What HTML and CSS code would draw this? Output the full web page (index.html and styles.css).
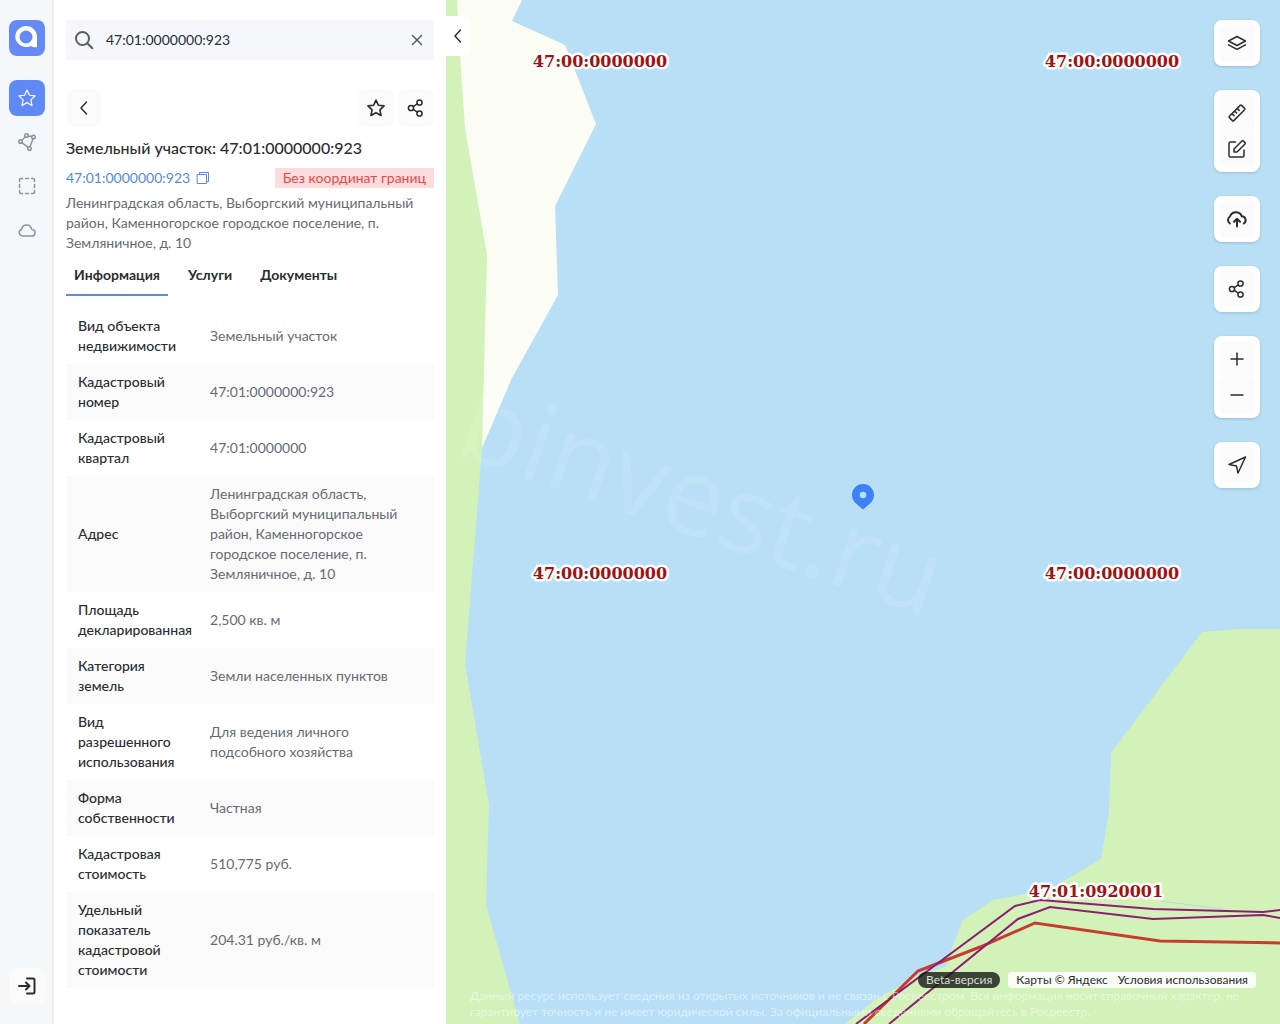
FILE: index.html
```html
<!DOCTYPE html>
<html lang="ru">

<head>
    <meta charset="UTF-8">
    <meta name="viewport" content="width=device-width, initial-scale=1">
    <title>Земельный участок: 47:01:0000000:923</title>
    <link rel="stylesheet" href="styles.css">
</head>

<body>
    <!-- Боковое меню -->
    <nav class="sidebar">
        <a href="#" class="logo" aria-label="Главная">
            <svg width="36" height="36" viewBox="0 0 36 36">
                <path d="M17 6a11 10.500 0 1 0 5 20c1.500 1 3.500 1.500 6 1.200V17A11 11 0 0 0 17 6z" fill="#fff" />
                <circle cx="17" cy="17" r="6.500" fill="#668af5" />
            </svg>
        </a>
        <button type="button" class="side-btn active" aria-label="Избранное">
            <svg class="icon" width="20" height="20" viewBox="0 0 24 24"><path d="M12 2.500l2.900 6.200 6.800.8-5 4.700 1.300 6.800-6-3.400-6 3.400 1.300-6.800-5-4.700 6.800-.8z" /></svg>
        </button>
        <button type="button" class="side-btn" aria-label="Полигон">
            <svg class="icon" width="20" height="20" viewBox="0 0 20 20"><circle cx="3.500" cy="9.500" r="1.800" /><circle cx="9.500" cy="3.500" r="1.800" /><circle cx="16.500" cy="5" r="1.800" /><circle cx="12.500" cy="16.500" r="1.800" /><path d="M4.800 8.200l3.500-3.500M11.300 4l3.400.6M16 6.800l-3 7.900M5 10.600l6 4.800" /></svg>
        </button>
        <button type="button" class="side-btn" aria-label="Выделить область">
            <svg class="icon" width="20" height="20" viewBox="0 0 20 20"><path d="M2.500 5.500V4A1.500 1.500 0 0 1 4 2.500h1.500M8.500 2.500h3M14.500 2.500H16A1.500 1.500 0 0 1 17.500 4v1.500M17.500 8.500v3M17.500 14.500V16a1.500 1.500 0 0 1-1.500 1.500h-1.500M11.500 17.500h-3M5.500 17.500H4A1.500 1.500 0 0 1 2.500 16v-1.500M2.500 11.500v-3" /></svg>
        </button>
        <button type="button" class="side-btn" aria-label="Облако">
            <svg class="icon" width="20" height="20" viewBox="0 0 20 20"><path d="M5.500 16h9a3.200 3.200 0 0 0 .6-6.400c-.3-.1-.5-.3-.6-.7A5 5 0 0 0 4.800 8.500c0 .5-.1.800-.5 1A3.400 3.400 0 0 0 5.500 16z" /></svg>
        </button>
        <button type="button" class="side-btn login" aria-label="Войти">
            <svg class="icon strong" width="20" height="20" viewBox="0 0 20 20"><path d="M10 2.500h6A1.500 1.500 0 0 1 17.500 4v12a1.500 1.500 0 0 1-1.500 1.500h-6M2 10h10M9 6.500l3.500 3.500L9 13.500" /></svg>
        </button>
    </nav>

    <!-- Карточка участка -->
    <section class="panel">
        <form class="search">
            <svg class="icon search-icon" width="20" height="20" viewBox="0 0 20 20"><circle cx="8.500" cy="8.500" r="6.500" /><path d="M13.300 13.300l5 5" /></svg>
            <input type="text" value="47:01:0000000:923" aria-label="Поиск">
            <button type="reset" class="clear" aria-label="Очистить">
                <svg class="icon" width="12" height="12" viewBox="0 0 12 12"><path d="M1.500 1.500l9 9M10.500 1.500l-9 9" /></svg>
            </button>
        </form>

        <div class="actions">
            <button type="button" class="btn" aria-label="Назад">
                <svg class="icon" width="20" height="20" viewBox="0 0 20 20"><path d="M12.500 4L7 10l5.500 6" /></svg>
            </button>
            <button type="button" class="btn push" aria-label="В избранное">
                <svg class="icon strong" width="20" height="20" viewBox="0 0 24 24"><path d="M12 2.500l2.900 6.200 6.800.8-5 4.700 1.300 6.800-6-3.400-6 3.400 1.300-6.800-5-4.700 6.800-.8z" /></svg>
            </button>
            <button type="button" class="btn" aria-label="Поделиться">
                <svg class="icon" width="20" height="20" viewBox="0 0 20 20"><circle cx="5" cy="10" r="2.600" /><circle cx="13.500" cy="4.500" r="2.600" /><circle cx="13.500" cy="15.500" r="2.600" /><path d="M7.200 8.600l4.100-2.700M7.200 11.400l4.100 2.700" /></svg>
            </button>
        </div>

        <h1>Земельный участок: 47:01:0000000:923</h1>

        <div class="number-row">
            <a href="#">47:01:0000000:923
                <svg class="icon copy" width="14" height="14" viewBox="0 0 14 14"><path d="M1.500 3.500h9v9h-9zM3.500 3.500v-2h9v9h-2" /></svg>
            </a>
            <span class="tag">Без координат границ</span>
        </div>

        <p class="address">Ленинградская область, Выборгский муниципальный район, Каменногорское городское поселение, п. Земляничное, д. 10</p>

        <div class="tabs" role="tablist">
            <button type="button" role="tab" aria-selected="true" class="tab active">Информация</button>
            <button type="button" role="tab" aria-selected="false" class="tab">Услуги</button>
            <button type="button" role="tab" aria-selected="false" class="tab">Документы</button>
        </div>

        <table class="info">
            <tr>
                <th scope="row">Вид объекта недвижимости</th>
                <td>Земельный участок</td>
            </tr>
            <tr>
                <th scope="row">Кадастровый номер</th>
                <td>47:01:0000000:923</td>
            </tr>
            <tr>
                <th scope="row">Кадастровый квартал</th>
                <td>47:01:0000000</td>
            </tr>
            <tr>
                <th scope="row">Адрес</th>
                <td>Ленинградская область, Выборгский муниципальный район, Каменногорское городское поселение, п. Земляничное, д. 10</td>
            </tr>
            <tr>
                <th scope="row">Площадь декларированная</th>
                <td>2,500 кв. м</td>
            </tr>
            <tr>
                <th scope="row">Категория земель</th>
                <td>Земли населенных пунктов</td>
            </tr>
            <tr>
                <th scope="row">Вид разрешенного использования</th>
                <td>Для ведения личного подсобного хозяйства</td>
            </tr>
            <tr>
                <th scope="row">Форма собственности</th>
                <td>Частная</td>
            </tr>
            <tr>
                <th scope="row">Кадастровая стоимость</th>
                <td>510,775 руб.</td>
            </tr>
            <tr>
                <th scope="row">Удельный показатель кадастровой стоимости</th>
                <td>204.31 руб./кв. м</td>
            </tr>
        </table>
    </section>

    <!-- Карта -->
    <main class="map">
        <svg class="map-canvas" viewBox="446 0 834 1024" preserveAspectRatio="xMidYMid slice">
            <rect x="446" width="834" height="1024" fill="#b8dff5" />
            <path d="M446 0H522L512 21 565 45 596 124 555 206 558 295 512 378 482 448 446 448z" fill="#fbfdf5" />
            <path d="M446 0H457L459 40 465 128 487 255 482 448 465 664 489 805 486 905 520 1024H446z" fill="#d2f2b9" />
            <path d="M1280 629L1240 629 1202 632 1111 753 1109 812 1101 859 1052 888 1030 893 993 900 963 920 952 948 946 966 915 977 875 1000 845 1024H1280z" fill="#d2f2b9" />
            <path class="stream" d="M1160 901L1223 909" />
            <path class="line red" d="M864 1024L918 971 980 947 1035 923 1160 941 1280 943" />
            <path class="line" d="M856 1024L1015 906 1040 900 1153 909 1263 912 1280 910" />
            <path class="line" d="M889 1024L1018 919 1050 907 1153 919 1263 915 1280 918" />
            <text class="watermark" x="928" y="617" transform="rotate(19 928 617)">binvest.ru</text>
            <text class="quarter" x="600" y="67">47:00:0000000</text>
            <text class="quarter" x="1112" y="67">47:00:0000000</text>
            <text class="quarter" x="600" y="579">47:00:0000000</text>
            <text class="quarter" x="1112" y="579">47:00:0000000</text>
            <text class="quarter" x="1096" y="897">47:01:0920001</text>
            <path d="M863 509.500l-7.800-6.800a11 11 0 1 1 15.600 0zM863 491.700a3.300 3.300 0 1 0 0 6.600 3.300 3.300 0 0 0 0-6.600z" fill="#3b82f6" fill-rule="evenodd" />
        </svg>

        <button type="button" class="collapse" aria-label="Свернуть панель">
            <svg class="icon" width="20" height="20" viewBox="0 0 20 20"><path d="M12.500 4L7 10l5.500 6" /></svg>
        </button>

        <div class="controls">
            <div class="group">
                <button type="button" class="btn" aria-label="Слои">
                    <svg class="icon" width="20" height="20" viewBox="0 0 20 20"><path d="M10 3.500l8.500 4.500-8.500 4.500L1.500 8zM1.500 11.800l8.500 4.500 8.500-4.500" /></svg>
                </button>
            </div>
            <div class="group">
                <button type="button" class="btn" aria-label="Линейка">
                    <svg class="icon" width="20" height="20" viewBox="0 0 20 20"><path d="M2.400 13.200L13.200 2.400a1 1 0 0 1 1.400 0l3 3a1 1 0 0 1 0 1.400L6.800 17.600a1 1 0 0 1-1.400 0l-3-3a1 1 0 0 1 0-1.400zM5 10.600l2 2M7.600 8l2 2M10.200 5.400l2 2" /></svg>
                </button>
                <button type="button" class="btn" aria-label="Рисование">
                    <svg class="icon" width="20" height="20" viewBox="0 0 20 20"><path d="M8.500 3H3.500A1.500 1.500 0 0 0 2 4.500v12A1.500 1.500 0 0 0 3.500 18h12a1.500 1.500 0 0 0 1.500-1.500V11M7 10l8-8a1 1 0 0 1 1.400 0l1.600 1.600a1 1 0 0 1 0 1.400l-8 8H7z" /></svg>
                </button>
            </div>
            <div class="group">
                <button type="button" class="btn" aria-label="Загрузить">
                    <svg class="icon strong" width="20" height="20" viewBox="0 0 20 20"><path d="M2.800 14.500A4.200 4.200 0 0 1 3 7.500 6.300 6.300 0 0 1 14.800 7.300a3.900 3.900 0 0 1 2 7.200M10 17.500V10M7 12.800l3-3 3 3" /></svg>
                </button>
            </div>
            <div class="group">
                <button type="button" class="btn" aria-label="Поделиться картой">
                    <svg class="icon" width="20" height="20" viewBox="0 0 20 20"><circle cx="5" cy="10" r="2.600" /><circle cx="13.500" cy="4.500" r="2.600" /><circle cx="13.500" cy="15.500" r="2.600" /><path d="M7.200 8.600l4.100-2.700M7.200 11.400l4.100 2.700" /></svg>
                </button>
            </div>
            <div class="group">
                <button type="button" class="btn" aria-label="Приблизить">
                    <svg class="icon" width="20" height="20" viewBox="0 0 20 20"><path d="M4 10h12M10 4v12" /></svg>
                </button>
                <button type="button" class="btn" aria-label="Отдалить">
                    <svg class="icon" width="20" height="20" viewBox="0 0 20 20"><path d="M4 10h12" /></svg>
                </button>
            </div>
            <div class="group">
                <button type="button" class="btn" aria-label="Моё местоположение">
                    <svg class="icon" width="20" height="20" viewBox="0 0 20 20"><path d="M18.500 2L2 9.500l7.500 1.600L11 18z" /></svg>
                </button>
            </div>
        </div>

        <footer class="map-footer">
            <div class="badges">
                <span class="beta">Beta-версия</span>
                <div class="copyright">
                    <span>Карты © Яндекс</span>
                    <a href="#">Условия использования</a>
                </div>
            </div>
            <p class="disclaimer">Данный ресурс использует сведения из открытых источников и не связан с Росреестром. Вся информация носит справочный характер, не гарантирует точность и не имеет юридической силы. За официальными сведениями обращайтесь в Росреестр.</p>
        </footer>
    </main>
</body>

</html>
```

FILE: styles.css
```css
* {
    box-sizing: border-box;
}

body {
    display: flex;
    height: 100vh;
    margin: 0;
    font-family: Lato, "Liberation Sans", sans-serif;
    font-size: 14px;
    line-height: 20px;
    color: #2b2d30;
    background-color: #fff;
}

button {
    padding: 0;
    border: none;
    background: none;
    font: inherit;
    color: inherit;
    cursor: pointer;
}

a {
    color: inherit;
    text-decoration: none;
}

.icon {
    display: block;
    fill: none;
    stroke: currentColor;
    stroke-width: 1.5;
    stroke-linecap: round;
    stroke-linejoin: round;
}

.icon.strong {
    stroke-width: 2;
}

.icon.copy {
    stroke-width: 1;
}

/* Боковое меню */
.sidebar {
    display: flex;
    flex-direction: column;
    align-items: center;
    flex: none;
    gap: 8px;
    width: 54px;
    padding: 20px 0;
    background-color: #f4f8fb;
    box-shadow: inset -2px 0 #e8eef3;
}

.logo {
    width: 36px;
    height: 36px;
    margin-bottom: 16px;
    border-radius: 8px;
    background-color: #668af5;
}

.side-btn {
    display: flex;
    align-items: center;
    justify-content: center;
    width: 36px;
    height: 36px;
    border-radius: 8px;
    color: #8d949c;
}

.side-btn.active {
    background-color: #5f89f7;
    color: #fff;
}

.side-btn.login {
    margin-top: auto;
    background-color: #fafafb;
    color: #2b2d30;
}

/* Карточка участка */
.panel {
    flex: none;
    width: 392px;
    padding: 20px 12px;
    overflow: auto;
    scrollbar-width: none;
}

.search {
    display: flex;
    align-items: center;
    gap: 12px;
    height: 40px;
    padding: 0 8px;
    background-color: #f5f7fb;
}

.search input {
    flex: 1;
    min-width: 0;
    padding: 0;
    border: none;
    outline: none;
    background: none;
    font: inherit;
    color: inherit;
}

.search-icon {
    stroke-width: 2;
    color: #595f66;
}

.clear {
    padding: 3px;
    color: #595f66;
}

.actions {
    display: flex;
    gap: 4px;
    margin: 30px 0 10px;
}

.btn {
    display: flex;
    align-items: center;
    justify-content: center;
    width: 36px;
    height: 36px;
    border-radius: 6px;
    background-color: #fbfbfb;
}

.btn.push {
    margin-left: auto;
}

h1 {
    margin: 0 0 8px;
    font-size: 16px;
    font-weight: 500;
    line-height: 24px;
}

.number-row {
    display: flex;
    justify-content: space-between;
    margin-bottom: 5px;
}

.number-row a {
    display: flex;
    align-items: center;
    gap: 6px;
    color: #5688dd;
}

.tag {
    padding: 0 8px;
    background-color: #fcdcdc;
    color: #df4b4b;
}

.address {
    margin: 0;
    color: #666b72;
}

.tabs {
    display: flex;
    gap: 12px;
    margin-bottom: 12px;
}

.tab {
    height: 43px;
    padding: 2px 8px 0;
    border-bottom: 2px solid transparent;
    font-weight: 700;
}

.tab.active {
    border-bottom-color: #5f89e6;
}

.info {
    width: 100%;
    border-collapse: collapse;
}

.info tr:nth-child(even) {
    background-color: #fafafb;
}

.info th {
    width: 132px;
    padding: 8px 6px 8px 12px;
    font-weight: 500;
    text-align: left;
}

.info td {
    padding: 8px 12px;
    color: #666b72;
}

/* Карта */
.map {
    position: relative;
    flex: 1;
    min-width: 0;
    overflow: hidden;
    background-color: #b8dff5;
}

.map-canvas {
    display: block;
    width: 100%;
    height: 100%;
}

.line {
    fill: none;
    stroke: #8e1e70;
    stroke-width: 2;
}

.line.red {
    stroke: #c63d30;
    stroke-width: 3;
}

.stream {
    fill: none;
    stroke: #b8dce0;
    stroke-width: 1;
}

.watermark {
    font-family: "Open Sans", "Noto Sans", sans-serif;
    font-size: 108px;
    font-weight: 500;
    text-anchor: end;
    fill: #fff;
    fill-opacity: 0.1;
}

.quarter {
    font-family: "DejaVu Serif", serif;
    font-size: 16px;
    font-weight: 700;
    text-anchor: middle;
    fill: #9c1414;
    stroke: #fff;
    stroke-width: 5;
    stroke-linejoin: round;
    paint-order: stroke;
}

.collapse {
    position: absolute;
    top: 16px;
    left: 0;
    width: 24px;
    height: 40px;
    padding-left: 2px;
    border-radius: 0 6px 6px 0;
    background-color: #fff;
}

.controls {
    position: absolute;
    top: 20px;
    right: 20px;
    display: flex;
    flex-direction: column;
    gap: 24px;
}

.group {
    padding: 5px;
    border-radius: 8px;
    background-color: #fff;
    box-shadow: 0 1px 3px rgba(0, 0, 0, 0.15);
}

.map-footer {
    position: absolute;
    right: 24px;
    bottom: 4px;
    left: 24px;
    font-size: 12px;
    line-height: 16px;
}

.badges {
    display: flex;
    justify-content: flex-end;
    gap: 8px;
}

.beta {
    padding: 0 8px;
    border-radius: 8px;
    background-color: rgba(20, 24, 20, 0.8);
    color: #d8dcd8;
}

.copyright {
    display: flex;
    gap: 10px;
    padding: 0 8px;
    border-radius: 3px;
    background-color: #f8fcf5;
}

.disclaimer {
    margin: 0;
    color: rgba(255, 255, 255, 0.5);
}
```
